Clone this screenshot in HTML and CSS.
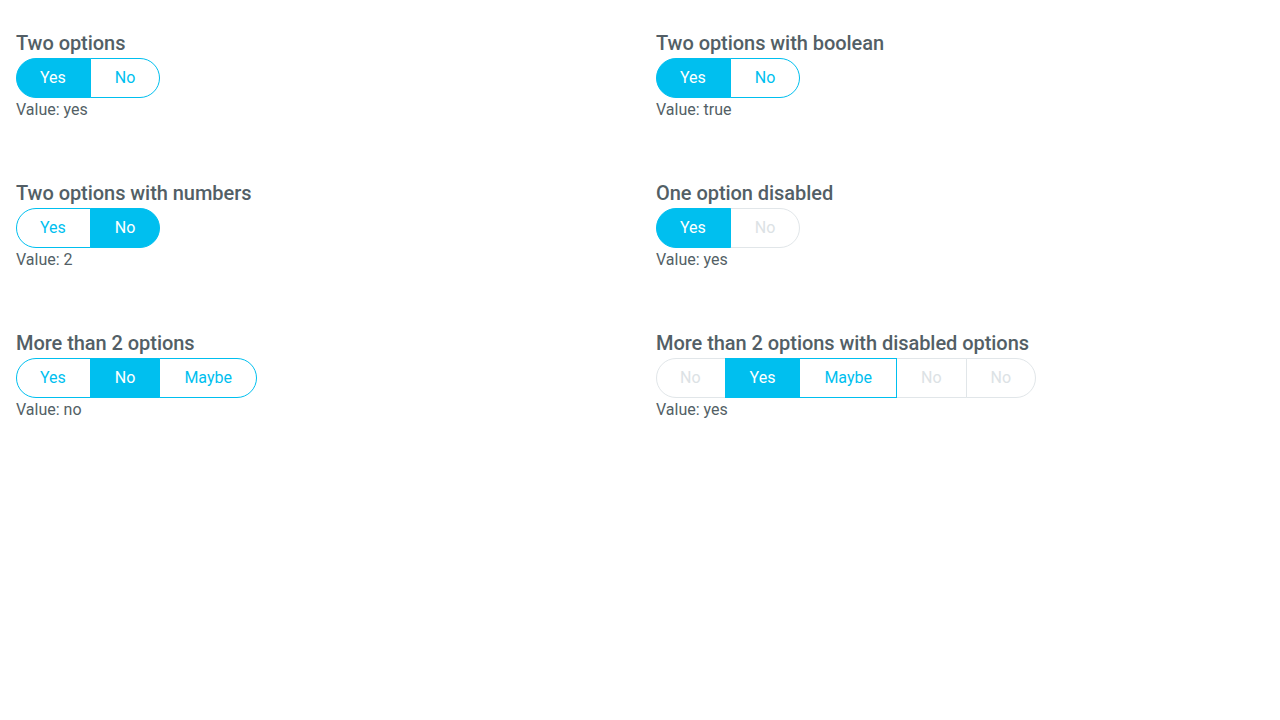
FILE: index.html
```html
<!DOCTYPE html>
<html>
<head>
<meta charset="utf-8">
<link rel="stylesheet" href="styles.css">
</head>
<body>
<div class="grid">
  <section class="example">
    <h3 class="title">Two options</h3>
    <div class="switch">
      <button class="opt active">Yes</button>
      <button class="opt">No</button>
    </div>
    <div class="value">Value: yes</div>
  </section>
  <section class="example">
    <h3 class="title">Two options with boolean</h3>
    <div class="switch">
      <button class="opt active">Yes</button>
      <button class="opt">No</button>
    </div>
    <div class="value">Value: true</div>
  </section>
  <section class="example">
    <h3 class="title">Two options with numbers</h3>
    <div class="switch">
      <button class="opt">Yes</button>
      <button class="opt active">No</button>
    </div>
    <div class="value">Value: 2</div>
  </section>
  <section class="example">
    <h3 class="title">One option disabled</h3>
    <div class="switch">
      <button class="opt active">Yes</button>
      <button class="opt disabled">No</button>
    </div>
    <div class="value">Value: yes</div>
  </section>
  <section class="example">
    <h3 class="title">More than 2 options</h3>
    <div class="switch">
      <button class="opt">Yes</button>
      <button class="opt active">No</button>
      <button class="opt">Maybe</button>
    </div>
    <div class="value">Value: no</div>
  </section>
  <section class="example">
    <h3 class="title">More than 2 options with disabled options</h3>
    <div class="switch">
      <button class="opt disabled">No</button>
      <button class="opt active">Yes</button>
      <button class="opt">Maybe</button>
      <button class="opt disabled">No</button>
      <button class="opt disabled">No</button>
    </div>
    <div class="value">Value: yes</div>
  </section>
</div>
</body>
</html>
```
FILE: styles.css
```css
html, body {
  margin: 0;
  padding: 0;
  background: #ffffff;
}
body {
  font-family: Roboto, "Liberation Sans", sans-serif;
  color: #535f66;
}
.grid {
  display: grid;
  grid-template-columns: 1fr 1fr;
  row-gap: 59px;
  padding: 31px 16px 32px;
  column-gap: 32px;
}
.example {
  display: flex;
  flex-direction: column;
  align-items: flex-start;
}
.title {
  margin: 0 0 3px;
  font-size: 20px;
  line-height: 24px;
  font-weight: 500;
  letter-spacing: -0.05px;
  color: #535f66;
}
.switch {
  display: flex;
  height: 40px;
}
.opt {
  position: relative;
  font-family: Roboto, "Liberation Sans", sans-serif;
  font-size: 16px;
  font-weight: 400;
  height: 40px;
  padding: 0 24px 2px;
  margin: 0;
  margin-left: -1px;
  border: 1px solid #00bfef;
  background: #ffffff;
  color: #00bfef;
  cursor: pointer;
}
.opt:first-child {
  margin-left: 0;
  padding-left: 23px;
  border-radius: 20px 0 0 20px;
}
.opt:last-child {
  border-radius: 0 20px 20px 0;
}
.opt.active {
  background: #00bfef;
  color: #ffffff;
}
.opt.disabled {
  border-color: #e1e6e9;
  color: #dce2e5;
  cursor: default;
}
.opt:not(.disabled) {
  z-index: 1;
}
.value {
  font-size: 16px;
  line-height: 24px;
  color: #535f66;
}
```
